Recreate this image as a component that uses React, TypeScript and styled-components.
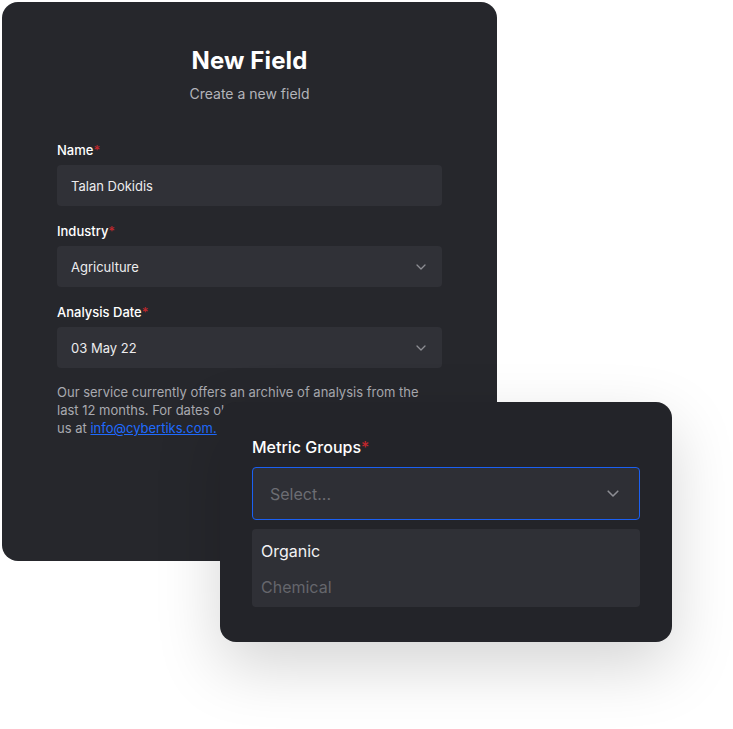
import React from "react";
import styled, { createGlobalStyle } from "styled-components";

const GlobalStyle = createGlobalStyle`
  html, body {
    margin: 0;
    padding: 0;
    background: #ffffff;
  }
  body {
    font-family: Inter, "Noto Sans", "DejaVu Sans", sans-serif;
  }
`;

// チェブロンアイコン
const Chevron: React.FC<{ size?: number }> = ({ size = 10 }) => (
  <svg width={size} height={size * 0.6} viewBox="0 0 10 6" fill="none">
    <path
      d="M1 1l4 4 4-4"
      stroke="#8d8e94"
      strokeWidth="1.3"
      strokeLinecap="round"
      strokeLinejoin="round"
    />
  </svg>
);

type FieldProps = { label: string; value: string; select?: boolean };

const Field: React.FC<FieldProps> = ({ label, value, select }) => (
  <FieldWrap>
    <Label>
      {label}
      <Req>*</Req>
    </Label>
    <Input>
      <span>{value}</span>
      {select && <Chevron />}
    </Input>
  </FieldWrap>
);

const App: React.FC = () => {
  return (
    <>
      <GlobalStyle />
      <Stage>
        <Card>
          <Title>New Field</Title>
          <Subtitle>Create a new field</Subtitle>
          <Form>
            <Field label="Name" value="Talan Dokidis" />
            <Field label="Industry" value="Agriculture" select />
            <Field label="Analysis Date" value="03 May 22" select />
          </Form>
          <Note>
            Our service currently offers an archive of analysis from the last 12
            months. For dates older than that, please contact
            <br />
            us at <a href="#">info@cybertiks.com.</a>
          </Note>
        </Card>

        {/* 重なったドロップダウンカード */}
        <Popover>
          <BigLabel>
            Metric Groups<Req>*</Req>
          </BigLabel>
          <SelectBox>
            <Placeholder>Select...</Placeholder>
            <Chevron size={12} />
          </SelectBox>
          <Menu>
            <Option>Organic</Option>
            <Option $muted>Chemical</Option>
          </Menu>
        </Popover>
      </Stage>
    </>
  );
};
export default App;

const Stage = styled.div`
  position: relative;
  width: 733px;
  height: 729px;
  padding: 2px;
  box-sizing: border-box;
`;

const Card = styled.div`
  width: 495px;
  height: 559px;
  box-sizing: border-box;
  background: #26272c;
  border-radius: 16px;
  padding: 44px 55px 0 55px;
  display: flex;
  flex-direction: column;
`;

const Title = styled.h1`
  margin: 0;
  text-align: center;
  color: #ffffff;
  font-size: 24px;
  font-weight: 700;
  line-height: 30px;
  letter-spacing: 0.1px;
`;

const Subtitle = styled.p`
  margin: 9px 0 0;
  text-align: center;
  color: #b3b4ba;
  font-size: 14px;
  line-height: 18px;
`;

const Form = styled.div`
  margin-top: 38px;
  display: flex;
  flex-direction: column;
  gap: 16px;
`;

const FieldWrap = styled.div`
  display: flex;
  flex-direction: column;
  gap: 6px;
`;

const Label = styled.label`
  color: #ffffff;
  font-size: 13px;
  font-weight: 500;
  line-height: 18px;
`;

const Req = styled.span`
  color: #c0272d;
`;

const Input = styled.div`
  height: 41px;
  box-sizing: border-box;
  background: #303137;
  border-radius: 4px;
  padding: 0 16px 0 14px;
  display: flex;
  align-items: center;
  justify-content: space-between;
  color: #ececee;
  font-size: 13px;
`;

const Note = styled.p`
  margin: 15px 0 0;
  color: #a9aab0;
  font-size: 13px;
  line-height: 18px;

  a {
    color: #1f6bff;
    text-decoration: underline;
  }
`;

const Popover = styled.div`
  position: absolute;
  left: 220px;
  top: 402px;
  width: 452px;
  height: 240px;
  box-sizing: border-box;
  background: #232429;
  border-radius: 16px;
  padding: 34px 32px 0 32px;
  box-shadow: 0 24px 64px rgba(0, 0, 0, 0.17);
  display: flex;
  flex-direction: column;
`;

const BigLabel = styled.div`
  color: #ffffff;
  font-size: 16px;
  font-weight: 500;
  line-height: 22px;
`;

const SelectBox = styled.div`
  margin-top: 9px;
  height: 53px;
  box-sizing: border-box;
  border: 1.5px solid #1b60f2;
  border-radius: 4px;
  background: #2e2f35;
  padding: 0 20px 0 17px;
  display: flex;
  align-items: center;
  justify-content: space-between;
`;

const Placeholder = styled.span`
  color: #6c6d73;
  font-size: 16px;
`;

const Menu = styled.div`
  margin-top: 9px;
  background: #2f3036;
  border-radius: 4px;
  padding: 4px 9px 2px;
  display: flex;
  flex-direction: column;
`;

const Option = styled.div<{ $muted?: boolean }>`
  height: 36px;
  display: flex;
  align-items: center;
  font-size: 16px;
  color: ${(p) => (p.$muted ? "#65666c" : "#f2f2f4")};
`;
